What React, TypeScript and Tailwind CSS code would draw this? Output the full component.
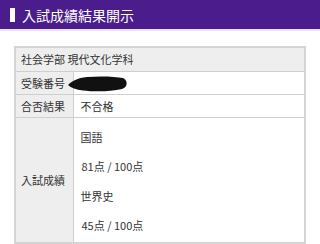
export default function App() {
  const font = {
    fontFamily: '"Noto Sans CJK JP", "Noto Sans", sans-serif',
  };

  const label = "bg-[#eeeeee] border border-[#cfcfcf] px-[5px] text-left font-normal";
  const value = "bg-white border border-[#cfcfcf] px-[7px]";

  return (
    <div className="w-[320px] h-[244px] bg-white text-[#333333] overflow-hidden" style={font}>
      <div className="h-[31px] bg-[#4b1c8c] flex items-center pl-[10px] gap-[7px] border-b-2 border-[#ece4f6]">
        <span className="w-[5px] h-[14px] bg-white" />
        <h1 className="text-white text-[14px] leading-none">入試成績結果開示</h1>
      </div>

      <div className="pt-[15px] px-[14px]">
        <table className="w-[292px] border-collapse border-2 border-[#d4d4d4] text-[11px] leading-[16px]">
          <tbody>
            <tr className="h-[24px]">
              <td colSpan={2} className={label}>
                社会学部 現代文化学科
              </td>
            </tr>
            <tr className="h-[23px]">
              <th className={`${label} w-[58px]`}>受験番号</th>
              <td className={`${value} relative`}>
                {/* redacted number */}
                <svg
                  className="absolute left-[-7px] top-[3px] blur-[0.6px]"
                  width="62"
                  height="18"
                  viewBox="0 0 62 18"
                >
                  <path
                    d="M1 10 C 5 6, 10 3, 20 2 C 34 1, 48 1.5, 56 3 C 61 5, 61 12, 55 14 C 44 16.5, 28 17, 16 15.5 C 9 14.5, 4 13, 1 10 Z"
                    fill="#111111"
                  />
                </svg>
              </td>
            </tr>
            <tr className="h-[23px]">
              <th className={label}>合否結果</th>
              <td className={value}>不合格</td>
            </tr>
            <tr>
              <th className={label}>入試成績</th>
              <td className={`${value} pt-[11px] pb-[9px]`}>
                <div className="flex flex-col gap-[13.5px]">
                  <p>国語</p>
                  <p className="pl-[1px]">81点 / 100点</p>
                  <p>世界史</p>
                  <p className="pl-[1px]">45点 / 100点</p>
                </div>
              </td>
            </tr>
          </tbody>
        </table>
      </div>
    </div>
  );
}
